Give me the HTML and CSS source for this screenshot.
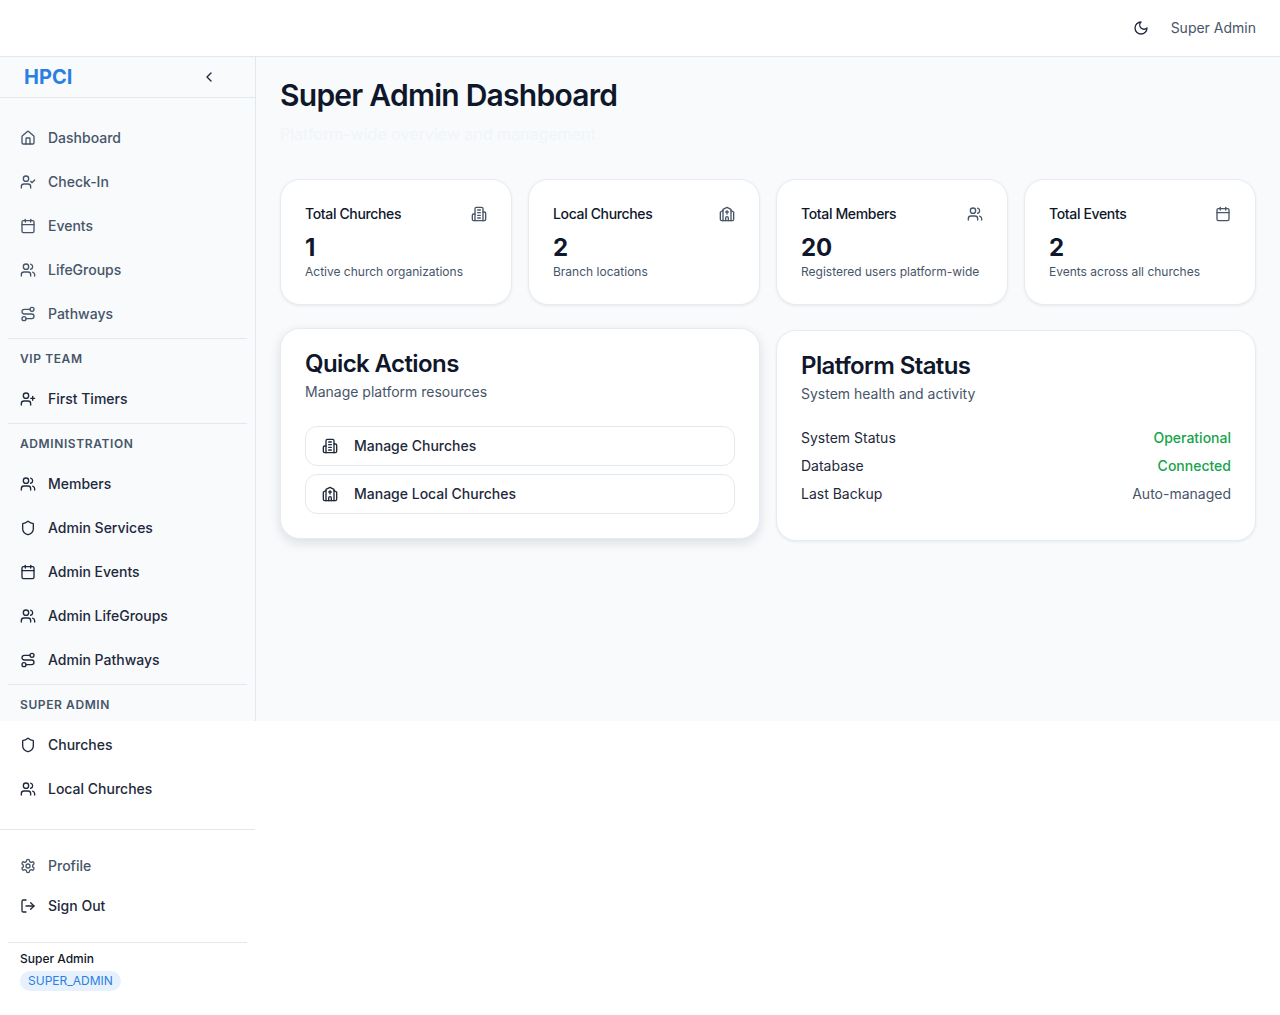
FILE: index.html
```html
<!DOCTYPE html>
<html lang="en">
<head>
  <meta charset="UTF-8">
  <meta name="viewport" content="width=device-width, initial-scale=1.0">
  <title>Super Admin Dashboard</title>
  <link rel="stylesheet" href="styles.css">
</head>
<body>
  <svg class="icon-defs" xmlns="http://www.w3.org/2000/svg">
    <symbol id="i-home" viewBox="0 0 24 24"><path d="M15 21v-8a1 1 0 0 0-1-1h-4a1 1 0 0 0-1 1v8"/><path d="M3 10a2 2 0 0 1 .709-1.528l7-5.999a2 2 0 0 1 2.582 0l7 5.999A2 2 0 0 1 21 10v9a2 2 0 0 1-2 2H5a2 2 0 0 1-2-2z"/></symbol>
    <symbol id="i-user-check" viewBox="0 0 24 24"><path d="M16 21v-2a4 4 0 0 0-4-4H6a4 4 0 0 0-4 4v2"/><circle cx="9" cy="7" r="4"/><polyline points="16 11 18 13 22 9"/></symbol>
    <symbol id="i-user-plus" viewBox="0 0 24 24"><path d="M16 21v-2a4 4 0 0 0-4-4H6a4 4 0 0 0-4 4v2"/><circle cx="9" cy="7" r="4"/><line x1="19" x2="19" y1="8" y2="14"/><line x1="22" x2="16" y1="11" y2="11"/></symbol>
    <symbol id="i-calendar" viewBox="0 0 24 24"><path d="M8 2v4"/><path d="M16 2v4"/><rect width="18" height="18" x="3" y="4" rx="2"/><path d="M3 10h18"/></symbol>
    <symbol id="i-users" viewBox="0 0 24 24"><path d="M16 21v-2a4 4 0 0 0-4-4H6a4 4 0 0 0-4 4v2"/><circle cx="9" cy="7" r="4"/><path d="M22 21v-2a4 4 0 0 0-3-3.87"/><path d="M16 3.13a4 4 0 0 1 0 7.75"/></symbol>
    <symbol id="i-route" viewBox="0 0 24 24"><circle cx="6" cy="19" r="3"/><path d="M9 19h8.5a3.5 3.5 0 0 0 0-7h-11a3.5 3.5 0 0 1 0-7H15"/><circle cx="18" cy="5" r="3"/></symbol>
    <symbol id="i-shield" viewBox="0 0 24 24"><path d="M20 13c0 5-3.5 7.5-7.66 8.95a1 1 0 0 1-.67-.01C7.5 20.5 4 18 4 13V6a1 1 0 0 1 1-1c2 0 4.5-1.2 6.24-2.72a1.17 1.17 0 0 1 1.52 0C14.51 3.81 17 5 19 5a1 1 0 0 1 1 1z"/></symbol>
    <symbol id="i-settings" viewBox="0 0 24 24"><path d="M12.22 2h-.44a2 2 0 0 0-2 2v.18a2 2 0 0 1-1 1.73l-.43.25a2 2 0 0 1-2 0l-.15-.08a2 2 0 0 0-2.73.73l-.22.38a2 2 0 0 0 .73 2.73l.15.1a2 2 0 0 1 1 1.72v.51a2 2 0 0 1-1 1.74l-.15.09a2 2 0 0 0-.73 2.73l.22.38a2 2 0 0 0 2.73.73l.15-.08a2 2 0 0 1 2 0l.43.25a2 2 0 0 1 1 1.73V20a2 2 0 0 0 2 2h.44a2 2 0 0 0 2-2v-.18a2 2 0 0 1 1-1.73l.43-.25a2 2 0 0 1 2 0l.15.08a2 2 0 0 0 2.73-.73l.22-.39a2 2 0 0 0-.73-2.73l-.15-.08a2 2 0 0 1-1-1.74v-.5a2 2 0 0 1 1-1.74l.15-.09a2 2 0 0 0 .73-2.73l-.22-.38a2 2 0 0 0-2.73-.73l-.15.08a2 2 0 0 1-2 0l-.43-.25a2 2 0 0 1-1-1.73V4a2 2 0 0 0-2-2z"/><circle cx="12" cy="12" r="3"/></symbol>
    <symbol id="i-log-out" viewBox="0 0 24 24"><path d="M9 21H5a2 2 0 0 1-2-2V5a2 2 0 0 1 2-2h4"/><polyline points="16 17 21 12 16 7"/><line x1="21" x2="9" y1="12" y2="12"/></symbol>
    <symbol id="i-chevron-left" viewBox="0 0 24 24"><path d="m15 18-6-6 6-6"/></symbol>
    <symbol id="i-moon" viewBox="0 0 24 24"><path d="M12 3a6 6 0 0 0 9 9 9 9 0 1 1-9-9Z"/></symbol>
    <symbol id="i-building" viewBox="0 0 24 24"><path d="M6 22V4a2 2 0 0 1 2-2h8a2 2 0 0 1 2 2v18Z"/><path d="M6 12H4a2 2 0 0 0-2 2v6a2 2 0 0 0 2 2h2"/><path d="M18 9h2a2 2 0 0 1 2 2v9a2 2 0 0 1-2 2h-2"/><path d="M10 6h4"/><path d="M10 10h4"/><path d="M10 14h4"/><path d="M10 18h4"/></symbol>
    <symbol id="i-church" viewBox="0 0 24 24"><path d="m18 7 4 2v11a2 2 0 0 1-2 2H4a2 2 0 0 1-2-2V9l4-2"/><path d="M14 22v-4a2 2 0 0 0-4 0v4"/><path d="M18 22V5l-6-3-6 3v17"/><path d="M12 7v5"/><path d="M10 9h4"/></symbol>
  </svg>

  <header class="topbar">
    <svg class="icon icon-dark"><use href="#i-moon"/></svg>
    <span class="topbar-user">Super Admin</span>
  </header>

  <div class="shell">
    <aside class="sidebar">
      <div class="sidebar-head">
        <span class="brand">HPCI</span>
        <svg class="icon icon-dark"><use href="#i-chevron-left"/></svg>
      </div>

      <nav class="sidebar-nav">
        <a class="nav-item muted"><svg class="icon"><use href="#i-home"/></svg>Dashboard</a>
        <a class="nav-item muted"><svg class="icon"><use href="#i-user-check"/></svg>Check-In</a>
        <a class="nav-item muted"><svg class="icon"><use href="#i-calendar"/></svg>Events</a>
        <a class="nav-item muted"><svg class="icon"><use href="#i-users"/></svg>LifeGroups</a>
        <a class="nav-item muted"><svg class="icon"><use href="#i-route"/></svg>Pathways</a>

        <div class="nav-group">
          <div class="nav-label">VIP Team</div>
          <a class="nav-item"><svg class="icon"><use href="#i-user-plus"/></svg>First Timers</a>
        </div>

        <div class="nav-group">
          <div class="nav-label">Administration</div>
          <a class="nav-item"><svg class="icon"><use href="#i-users"/></svg>Members</a>
          <a class="nav-item"><svg class="icon"><use href="#i-shield"/></svg>Admin Services</a>
          <a class="nav-item"><svg class="icon"><use href="#i-calendar"/></svg>Admin Events</a>
          <a class="nav-item"><svg class="icon"><use href="#i-users"/></svg>Admin LifeGroups</a>
          <a class="nav-item"><svg class="icon"><use href="#i-route"/></svg>Admin Pathways</a>
        </div>

        <div class="nav-group">
          <div class="nav-label">Super Admin</div>
          <a class="nav-item"><svg class="icon"><use href="#i-shield"/></svg>Churches</a>
          <a class="nav-item"><svg class="icon"><use href="#i-users"/></svg>Local Churches</a>
        </div>
      </nav>

      <div class="sidebar-bottom">
        <a class="nav-item nav-item-short muted"><svg class="icon"><use href="#i-settings"/></svg>Profile</a>
        <a class="nav-item nav-item-short"><svg class="icon"><use href="#i-log-out"/></svg>Sign Out</a>
      </div>

      <div class="sidebar-user">
        <div class="sidebar-user-name">Super Admin</div>
        <span class="role-badge">SUPER_ADMIN</span>
      </div>
    </aside>

    <main class="main">
      <h1 class="page-title">Super Admin Dashboard</h1>
      <p class="page-subtitle">Platform-wide overview and management</p>

      <section class="stats">
        <div class="card stat">
          <div class="stat-head"><span>Total Churches</span><svg class="icon"><use href="#i-building"/></svg></div>
          <div class="stat-value">1</div>
          <div class="stat-note">Active church organizations</div>
        </div>
        <div class="card stat">
          <div class="stat-head"><span>Local Churches</span><svg class="icon"><use href="#i-church"/></svg></div>
          <div class="stat-value">2</div>
          <div class="stat-note">Branch locations</div>
        </div>
        <div class="card stat">
          <div class="stat-head"><span>Total Members</span><svg class="icon"><use href="#i-users"/></svg></div>
          <div class="stat-value">20</div>
          <div class="stat-note">Registered users platform-wide</div>
        </div>
        <div class="card stat">
          <div class="stat-head"><span>Total Events</span><svg class="icon"><use href="#i-calendar"/></svg></div>
          <div class="stat-value">2</div>
          <div class="stat-note">Events across all churches</div>
        </div>
      </section>

      <section class="panels">
        <div class="card panel panel-raised">
          <h2 class="panel-title">Quick Actions</h2>
          <p class="panel-sub">Manage platform resources</p>
          <div class="actions">
            <a class="action"><svg class="icon icon-dark"><use href="#i-building"/></svg>Manage Churches</a>
            <a class="action"><svg class="icon icon-dark"><use href="#i-church"/></svg>Manage Local Churches</a>
          </div>
        </div>
        <div class="card panel">
          <h2 class="panel-title">Platform Status</h2>
          <p class="panel-sub">System health and activity</p>
          <div class="status-list">
            <div class="status-row"><span>System Status</span><span class="status-ok">Operational</span></div>
            <div class="status-row"><span>Database</span><span class="status-ok">Connected</span></div>
            <div class="status-row"><span>Last Backup</span><span class="status-muted">Auto-managed</span></div>
          </div>
        </div>
      </section>
    </main>
  </div>
</body>
</html>
```

FILE: styles.css
```css
* {
  box-sizing: border-box;
}

body {
  margin: 0;
  min-height: 1015px;
  background-color: #fff;
  color: #1e293b;
  font-family: Inter, "Liberation Sans", sans-serif;
  font-size: 14px;
  line-height: 20px;
}

.icon-defs {
  display: none;
}

.icon {
  width: 16px;
  height: 16px;
  flex-shrink: 0;
  fill: none;
  stroke: currentColor;
  stroke-width: 2;
  stroke-linecap: round;
  stroke-linejoin: round;
}

.icon-dark {
  color: #1e293b;
}

/* top bar */
.topbar {
  display: flex;
  align-items: center;
  justify-content: flex-end;
  gap: 22px;
  height: 57px;
  padding: 0 24px;
  background-color: #fff;
  border-bottom: 1px solid #e2e8f0;
}

.topbar-user {
  color: #475569;
}

.shell {
  display: flex;
  height: 664px;
  background-color: #f8fafc;
}

/* sidebar */
.sidebar {
  width: 256px;
  flex-shrink: 0;
  border-right: 1px solid #e2e8f0;
}

.sidebar-head {
  display: flex;
  align-items: center;
  justify-content: space-between;
  height: 41px;
  padding: 0 38px 0 24px;
  border-bottom: 1px solid #e2e8f0;
}

.brand {
  color: #2b7fe3;
  font-size: 20px;
  font-weight: 700;
}

.sidebar-nav {
  padding: 18px 8px;
}

.nav-item {
  display: flex;
  align-items: center;
  gap: 12px;
  height: 44px;
  padding: 0 12px;
  font-weight: 500;
  color: #1e293b;
}

.nav-item.muted {
  color: #475569;
}

.nav-item-short {
  height: 40px;
}

.nav-group {
  margin-top: 2px;
  border-top: 1px solid #e2e8f0;
}

.nav-label {
  padding: 12px 12px 10px;
  color: #475569;
  font-size: 12px;
  font-weight: 600;
  line-height: 16px;
  letter-spacing: 0.05em;
  text-transform: uppercase;
}

.sidebar-bottom {
  padding: 16px 8px;
  border-top: 1px solid #e2e8f0;
}

.sidebar-user {
  margin: 0 8px;
  padding: 8px 12px 0;
  border-top: 1px solid #e2e8f0;
}

.sidebar-user-name {
  font-size: 12px;
  line-height: 16px;
  font-weight: 500;
  color: #0f172a;
}

.role-badge {
  display: inline-block;
  margin-top: 4px;
  padding: 2px 8px;
  border-radius: 999px;
  background-color: #e6f1fd;
  color: #2b7fe3;
  font-size: 12px;
  line-height: 16px;
}

/* main area */
.main {
  flex: 1;
  min-width: 0;
  padding: 20px 24px;
}

.page-title {
  margin: 0;
  color: #0f172a;
  font-size: 30px;
  font-weight: 600;
  line-height: 36px;
  letter-spacing: -0.025em;
}

.page-subtitle {
  margin: 9px 0 0;
  color: #f1f5f9;
  font-size: 16px;
  line-height: 24px;
}

.card {
  background-color: #fff;
  border: 1px solid #e7ecf3;
  border-radius: 20px;
  box-shadow: 0 1px 3px rgba(15, 23, 42, 0.07);
}

.stats {
  display: grid;
  grid-template-columns: repeat(4, 1fr);
  gap: 16px;
  margin-top: 33px;
}

.stat {
  padding: 24px;
}

.stat-head {
  display: flex;
  align-items: center;
  justify-content: space-between;
  height: 20px;
  font-weight: 500;
  letter-spacing: -0.025em;
  color: #0f172a;
}

.stat-head .icon {
  color: #475569;
}

.stat-value {
  margin-top: 8px;
  color: #0f172a;
  font-size: 24px;
  font-weight: 700;
  line-height: 32px;
}

.stat-note {
  color: #475569;
  font-size: 12px;
  line-height: 16px;
}

.panels {
  display: grid;
  grid-template-columns: repeat(2, 1fr);
  gap: 16px;
  align-items: start;
  margin-top: 25px;
}

.panel {
  padding: 24px;
  height: 211px;
}

.panel-raised {
  transform: translateY(-2px);
  box-shadow: 0 4px 12px rgba(15, 23, 42, 0.12);
}

.panel-title {
  margin: -5px 0 0;
  color: #0f172a;
  font-size: 24px;
  font-weight: 600;
  line-height: 32px;
  letter-spacing: -0.025em;
}

.panel-sub {
  margin: 2px 0 0;
  color: #475569;
}

.actions {
  display: flex;
  flex-direction: column;
  gap: 8px;
  margin-top: 24px;
}

.action {
  display: flex;
  align-items: center;
  gap: 16px;
  height: 40px;
  padding: 0 16px;
  border: 1px solid #e2e8f0;
  border-radius: 12px;
  font-weight: 500;
}

.status-list {
  margin-top: 20px;
}

.status-row {
  display: flex;
  justify-content: space-between;
  height: 28px;
  align-items: center;
  color: #1e293b;
}

.status-ok {
  color: #16a34a;
  font-weight: 500;
}

.status-muted {
  color: #475569;
}
```
